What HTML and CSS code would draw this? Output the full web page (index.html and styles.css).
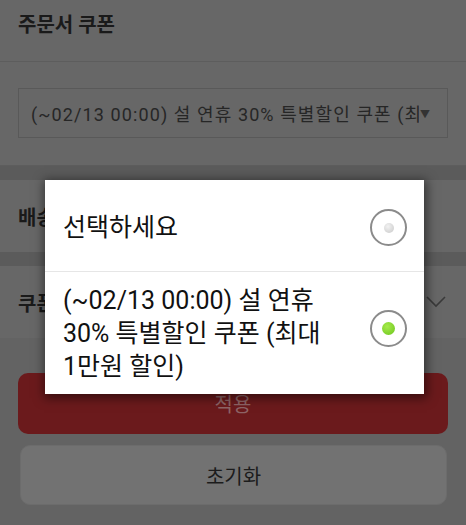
FILE: index.html
```html
<!DOCTYPE html>
<html lang="ko">
<head>
    <meta charset="UTF-8">
    <meta name="viewport" content="width=device-width, initial-scale=1.0">
    <title>주문서 쿠폰</title>
    <link rel="stylesheet" href="styles.css">
</head>
<body>
    <div class="page">
      <div class="sec sec-title">
        <h2 class="title">주문서 쿠폰</h2>
      </div>
      <div class="sec sec-select">
        <div class="select-box">
          <span class="select-text">(~02/13 00:00) 설 연휴 30% 특별할인 쿠폰 (최대 1만원 할인)</span>
          <span class="select-arrow">&#9660;</span>
        </div>
      </div>
      <div class="band"></div>
      <div class="sec sec-row">
        <span class="row-label">배송비 쿠폰</span>
      </div>
      <div class="band"></div>
      <div class="sec sec-row">
        <span class="row-label">쿠폰 할인</span>
        <svg class="chevron" width="20" height="12" viewBox="0 0 20 12">
          <path d="M1 1 L10 10 L19 1" fill="none" stroke="#3a3a3a" stroke-width="1.6"/>
        </svg>
      </div>
      <div class="actions">
        <button class="btn btn-apply">적용</button>
        <button class="btn btn-reset">초기화</button>
      </div>
    </div>

    <div class="dialog">
      <div class="option option-first">
        <span class="option-text">선택하세요</span>
        <span class="radio"><span class="dot dot-off"></span></span>
      </div>
      <div class="option option-long">
        <span class="option-text">(~02/13 00:00) 설 연휴 30% 특별할인 쿠폰 (최대 1만원 할인)</span>
        <span class="radio"><span class="dot dot-on"></span></span>
      </div>
    </div>
</body>
</html>
```

FILE: styles.css
```css
html, body {
  margin: 0;
  padding: 0;
  width: 466px;
  height: 525px;
  overflow: hidden;
}
body {
  background: #636363;
  font-family: Roboto, "Noto Sans CJK KR", sans-serif;
  color: #1c1c1c;
  position: relative;
}
.sec {
  background: #676767;
  padding: 0 18px;
}
.sec-title {
  height: 51px;
  padding-top: 10px;
  border-bottom: 1px solid #5d5d5d;
}
.title {
  margin: 0;
  font-size: 20px;
  line-height: 31px;
  font-weight: 700;
  color: #1a1a1a;
}
.sec-select {
  padding-top: 26px;
  padding-bottom: 27px;
  border-bottom: 1px solid #5d5d5d;
}
.select-box {
  height: 48px;
  border: 1px solid #595959;
  display: flex;
  align-items: center;
  padding: 0 17px 0 12px;
}
.select-text {
  flex: 1;
  white-space: nowrap;
  overflow: hidden;
  font-size: 18px;
  letter-spacing: 1.1px;
  color: #262626;
}
.select-arrow {
  font-size: 10px;
  color: #333;
  margin-left: 1px;
}
.band {
  height: 14px;
  background: #5b5b5b;
}
.sec-row {
  height: 72px;
  display: flex;
  align-items: center;
  justify-content: space-between;
}
.row-label {
  font-size: 20px;
  font-weight: 700;
  color: #1a1a1a;
}
.chevron {
  margin-right: 2px;
}
.actions {
  padding: 35px 18px 0 18px;
  display: flex;
  flex-direction: column;
  gap: 11px;
}
.btn {
  height: 61px;
  border-radius: 10px;
  font-family: inherit;
  font-size: 20px;
}
.btn-apply {
  background: #6b1a1c;
  border: none;
  color: #8e6466;
}
.btn-reset {
  height: 60px;
  margin: 0 1px 0 2px;
  background: #727272;
  border: 1px solid #6c6c6c;
  color: #1c1c1c;
}

/* popup list */
.dialog {
  position: absolute;
  left: 45px;
  top: 180px;
  width: 379px;
  height: 214px;
  background: #fff;
  box-shadow: 1px 2px 10px 2px rgba(0, 0, 0, 0.5);
}
.option {
  display: flex;
  align-items: center;
  box-sizing: border-box;
  padding: 0 17px 0 18px;
  height: 92px;
  border-bottom: 1px solid #e6e6e6;
}
.option-first {
  padding-top: 4px;
}
.option-long {
  height: 122px;
  border-bottom: none;
}
.option-text {
  flex: 1;
  font-size: 25px;
  line-height: 33px;
  color: #111;
  padding-right: 20px;
  word-break: keep-all;
}
.radio {
  width: 33px;
  height: 33px;
  border: 2px solid #8b8b8b;
  border-radius: 50%;
  display: flex;
  align-items: center;
  justify-content: center;
  flex-shrink: 0;
}
.option-long .radio {
  margin-bottom: 10px;
}
.dot {
  border-radius: 50%;
}
.dot-off {
  width: 10px;
  height: 10px;
  background: radial-gradient(circle at 40% 35%, #f2f2f2, #c8c8c8);
}
.dot-on {
  width: 13px;
  height: 13px;
  background: radial-gradient(circle at 40% 35%, #a6ea4c, #6cc51c);
}
```
